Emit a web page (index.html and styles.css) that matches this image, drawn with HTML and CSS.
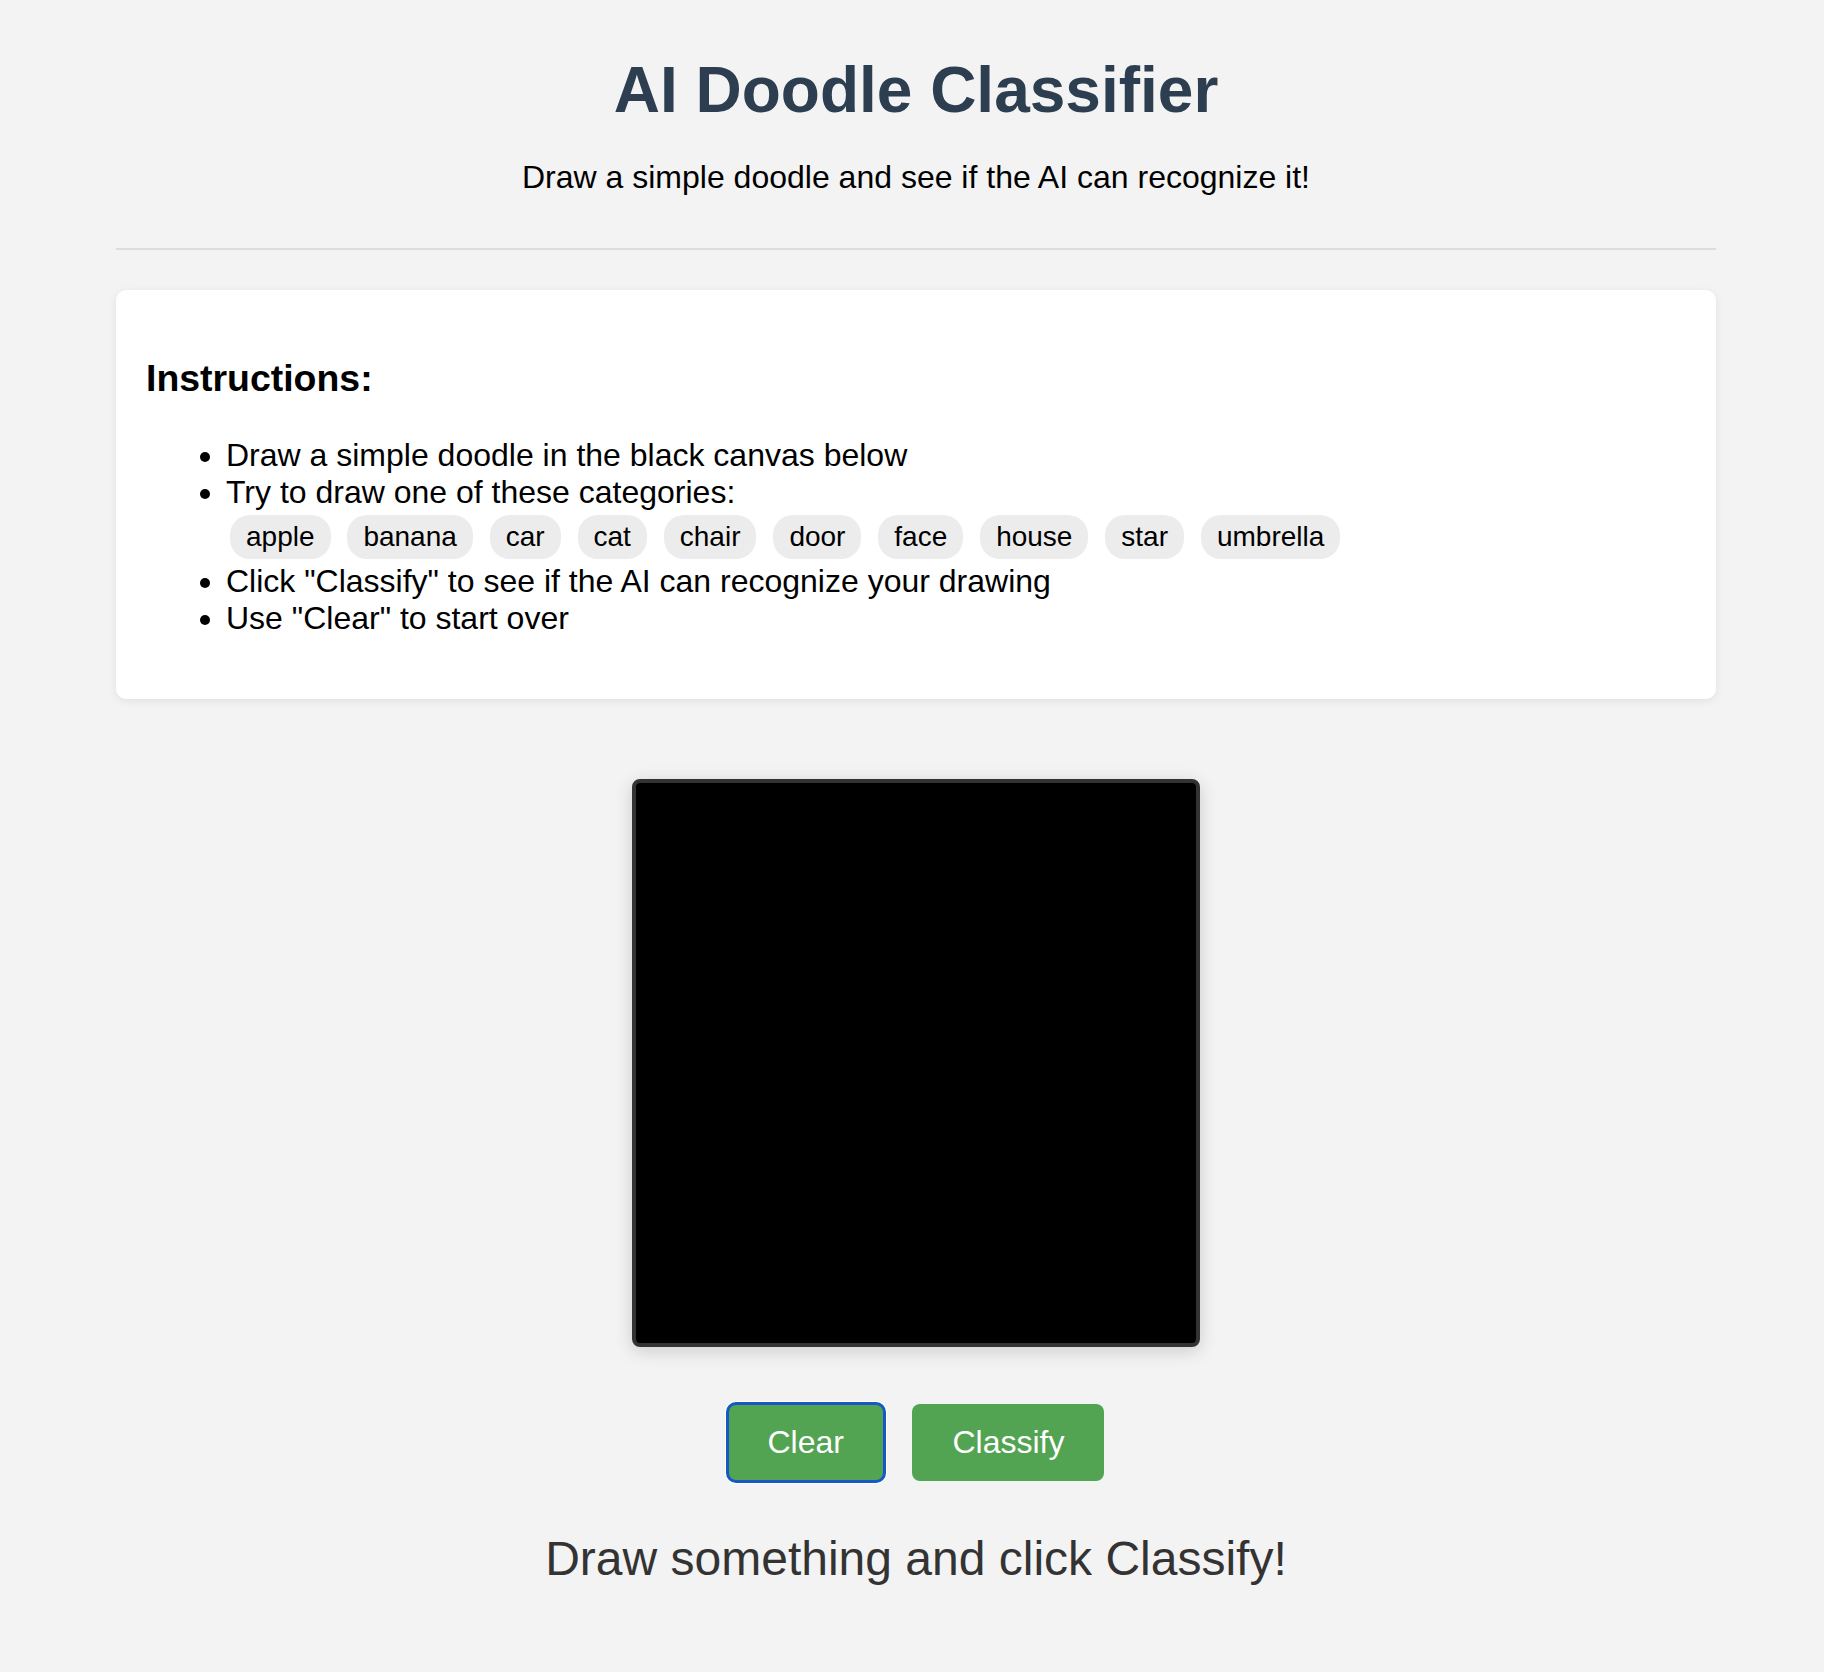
FILE: index.html
```html
<!DOCTYPE html>
<html lang="en">
<head>
<meta charset="utf-8">
<title>AI Doodle Classifier</title>
<link rel="stylesheet" href="styles.css">
</head>
<body>
<div class="container">
  <header class="header">
    <h1 class="title">AI Doodle Classifier</h1>
    <p class="subtitle">Draw a simple doodle and see if the AI can recognize it!</p>
  </header>

  <section class="card">
    <h3 class="card-title">Instructions:</h3>
    <ul class="steps">
      <li>Draw a simple doodle in the black canvas below</li>
      <li>Try to draw one of these categories:
        <div class="tags">
          <span class="tag">apple</span>
          <span class="tag">banana</span>
          <span class="tag">car</span>
          <span class="tag">cat</span>
          <span class="tag">chair</span>
          <span class="tag">door</span>
          <span class="tag">face</span>
          <span class="tag">house</span>
          <span class="tag">star</span>
          <span class="tag">umbrella</span>
        </div>
      </li>
      <li>Click "Classify" to see if the AI can recognize your drawing</li>
      <li>Use "Clear" to start over</li>
    </ul>
  </section>

  <div class="canvas-wrap">
    <canvas class="board" width="560" height="560"></canvas>
  </div>

  <div class="controls">
    <button class="btn btn-focus" type="button">Clear</button>
    <button class="btn" type="button">Classify</button>
  </div>

  <p class="status">Draw something and click Classify!</p>
</div>
</body>
</html>
```
FILE: styles.css
```css
html {
  background: #f3f3f3;
}

body {
  margin: 0;
  padding: 0 0 0 8px;
  background: #f3f3f3;
  font-family: "Liberation Sans", Arial, Helvetica, sans-serif;
  font-size: 32px;
  color: #000;
}

.container {
  max-width: 1600px;
  margin: 0 auto;
}

.header {
  text-align: center;
  padding-bottom: 20px;
  border-bottom: 2px solid #dcdcdc;
}

.title {
  margin: 53px 0 32px;
  font-size: 64px;
  font-weight: 700;
  color: #2c3e50;
}

.subtitle {
  margin: 0 0 32px;
  font-size: 32px;
}

.card {
  margin-top: 40px;
  padding: 30px;
  background: #fff;
  border-radius: 10px;
  box-shadow: 0 2px 8px rgba(0, 0, 0, 0.08);
}

.card-title {
  margin: 37px 0;
  font-size: 37.44px;
  font-weight: 700;
}

.steps {
  margin: 32px 0;
  padding-left: 80px;
}

.tag {
  display: inline-block;
  margin: 4px;
  padding: 6px 16px;
  font-size: 28px;
  background: #ececec;
  border-radius: 20px;
}

.canvas-wrap {
  display: flex;
  justify-content: center;
  margin-top: 80px;
}

.board {
  display: block;
  width: 560px;
  height: 560px;
  background: #000;
  border: 4px solid #333;
  border-radius: 8px;
  box-shadow: 0 4px 18px rgba(0, 0, 0, 0.16);
}

.controls {
  display: flex;
  justify-content: center;
  gap: 28.5px;
  margin-top: 57px;
}

.btn {
  font-family: inherit;
  font-size: 32px;
  line-height: normal;
  padding: 20px 40px;
  background: #52a352;
  color: #fff;
  border: none;
  border-radius: 8px;
  cursor: pointer;
}

.btn-focus {
  outline: 3px solid #1558c6;
  outline-offset: -1px;
  box-shadow: 0 0 0 3px #fff;
}

.status {
  margin: 50px 0 0;
  text-align: center;
  font-size: 48px;
  color: #333;
}
```
